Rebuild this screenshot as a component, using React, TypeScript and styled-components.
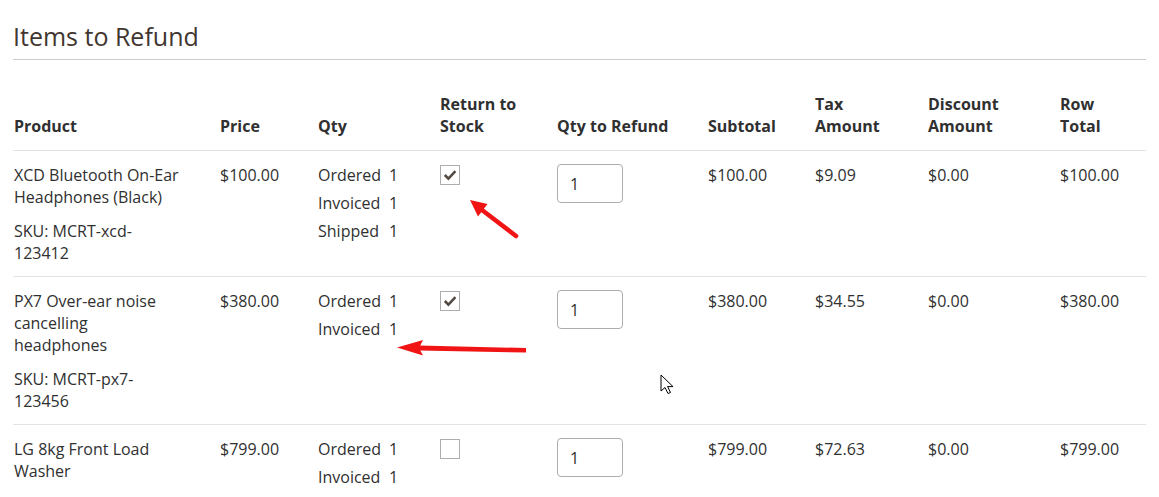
import styled, { createGlobalStyle } from 'styled-components';

const GlobalStyle = createGlobalStyle`
  html, body {
    margin: 0;
    padding: 0;
    background: #fff;
    overflow: hidden;
  }
  body {
    font-family: 'Open Sans', 'Liberation Sans', sans-serif;
    font-size: 16px;
    line-height: 22px;
    color: #303030;
  }
`;

const Page = styled.div`
  position: relative;
  box-sizing: border-box;
  height: 497px;
  padding: 19px 13px 0;
  overflow: hidden;
`;

const SectionTitle = styled.h2`
  margin: 0;
  padding-bottom: 6px;
  border-bottom: 1px solid #cccccc;
  font-size: 25px;
  line-height: 34px;
  font-weight: 400;
  color: #41362f;
`;

const Table = styled.table`
  width: 100%;
  margin-top: 20px;
  border-collapse: collapse;
  table-layout: fixed;
`;

const HeadCell = styled.th`
  padding: 13px 4px 13px 1px;
  border-bottom: 1px solid #e3e3e3;
  text-align: left;
  vertical-align: bottom;
  font-weight: 700;
  color: #303030;
`;

const Cell = styled.td`
  padding: 13px 4px 12px 1px;
  border-bottom: 1px solid #e3e3e3;
  vertical-align: top;
`;

const ProductName = styled.div``;

const Sku = styled.div`
  margin-top: 12px;
`;

const QtyList = styled.div`
  display: grid;
  grid-template-columns: max-content max-content;
  column-gap: 8px;
  row-gap: 6px;
`;

const QtyLabel = styled.span``;

const CheckBox = styled.span<{ $checked: boolean }>`
  display: flex;
  align-items: center;
  justify-content: center;
  box-sizing: border-box;
  width: 20px;
  height: 20px;
  margin-top: 1px;
  border: 1px solid #adadad;
  background: #fff;
`;

const QtyInput = styled.input`
  box-sizing: border-box;
  width: 66px;
  height: 39px;
  padding: 0 12px;
  border: 1px solid #adadad;
  border-radius: 4px;
  font-family: 'Open Sans', 'Liberation Sans', sans-serif;
  font-size: 16px;
  color: #303030;
  background: #fff;
  outline: none;
`;

const Overlay = styled.svg`
  position: absolute;
  left: 0;
  top: 0;
  pointer-events: none;
`;

type Item = {
  name: string[];
  sku?: string[];
  price: string;
  qty: [string, number][];
  stock: boolean;
  subtotal: string;
  tax: string;
  discount: string;
  total: string;
};

const items: Item[] = [
  {
    name: ['XCD Bluetooth On-Ear', 'Headphones (Black)'],
    sku: ['SKU: MCRT-xcd-', '123412'],
    price: '$100.00',
    qty: [
      ['Ordered', 1],
      ['Invoiced', 1],
      ['Shipped', 1],
    ],
    stock: true,
    subtotal: '$100.00',
    tax: '$9.09',
    discount: '$0.00',
    total: '$100.00',
  },
  {
    name: ['PX7 Over-ear noise', 'cancelling', 'headphones'],
    sku: ['SKU: MCRT-px7-', '123456'],
    price: '$380.00',
    qty: [
      ['Ordered', 1],
      ['Invoiced', 1],
    ],
    stock: true,
    subtotal: '$380.00',
    tax: '$34.55',
    discount: '$0.00',
    total: '$380.00',
  },
  {
    name: ['LG 8kg Front Load', 'Washer'],
    price: '$799.00',
    qty: [
      ['Ordered', 1],
      ['Invoiced', 1],
    ],
    stock: false,
    subtotal: '$799.00',
    tax: '$72.63',
    discount: '$0.00',
    total: '$799.00',
  },
];

// column widths, taken from the left edge of each column
const widths = [206, 98, 122, 117, 151, 107, 113, 132, 87];

const lines = (parts: string[]) =>
  parts.map((p, i) => (
    <span key={i}>
      {p}
      {i < parts.length - 1 && <br />}
    </span>
  ));

const Check = () => (
  <svg width="14" height="12" viewBox="0 0 14 12">
    <path d="M1.8 6 L5.4 9.6 L12.4 2.2" fill="none" stroke="#514943" strokeWidth="2.5" />
  </svg>
);

const Annotations = () => (
  <Overlay width="1159" height="497" viewBox="0 0 1159 497">
    <line x1="516" y1="236" x2="482" y2="210" stroke="#f01414" strokeWidth="4.5" strokeLinecap="round" />
    <polygon points="470,200 487.5,204 478,216.5" fill="#f01414" />
    <polygon points="526,348 526,352.5 419,350.5 419,345.5" fill="#f01414" />
    <polygon points="397,347.5 423,340 419,348 423,355.5" fill="#f01414" />
    <path
      d="M661 375 L661 391 L665 387.5 L668 393.5 L670.5 392.5 L667.6 386.6 L673 386.6 Z"
      fill="#fff"
      stroke="#000"
      strokeWidth="1"
      strokeLinejoin="round"
    />
  </Overlay>
);

const App = () => (
  <Page>
    <GlobalStyle />
    <SectionTitle>Items to Refund</SectionTitle>
    <Table>
      <colgroup>
        {widths.map((w, i) => (
          <col key={i} style={{ width: w }} />
        ))}
      </colgroup>
      <thead>
        <tr>
          <HeadCell>Product</HeadCell>
          <HeadCell>Price</HeadCell>
          <HeadCell>Qty</HeadCell>
          <HeadCell>
            Return to
            <br />
            Stock
          </HeadCell>
          <HeadCell>Qty to Refund</HeadCell>
          <HeadCell>Subtotal</HeadCell>
          <HeadCell>
            Tax
            <br />
            Amount
          </HeadCell>
          <HeadCell>
            Discount
            <br />
            Amount
          </HeadCell>
          <HeadCell>
            Row
            <br />
            Total
          </HeadCell>
        </tr>
      </thead>
      <tbody>
        {items.map((item, i) => (
          <tr key={i}>
            <Cell>
              <ProductName>{lines(item.name)}</ProductName>
              {item.sku && <Sku>{lines(item.sku)}</Sku>}
            </Cell>
            <Cell>{item.price}</Cell>
            <Cell>
              <QtyList>
                {item.qty.map(([label, n]) => [
                  <QtyLabel key={label}>{label}</QtyLabel>,
                  <span key={label + '-n'}>{n}</span>,
                ])}
              </QtyList>
            </Cell>
            <Cell>
              <CheckBox $checked={item.stock}>{item.stock && <Check />}</CheckBox>
            </Cell>
            <Cell>
              <QtyInput type="text" defaultValue="1" />
            </Cell>
            <Cell>{item.subtotal}</Cell>
            <Cell>{item.tax}</Cell>
            <Cell>{item.discount}</Cell>
            <Cell>{item.total}</Cell>
          </tr>
        ))}
      </tbody>
    </Table>
    <Annotations />
  </Page>
);

export default App;
